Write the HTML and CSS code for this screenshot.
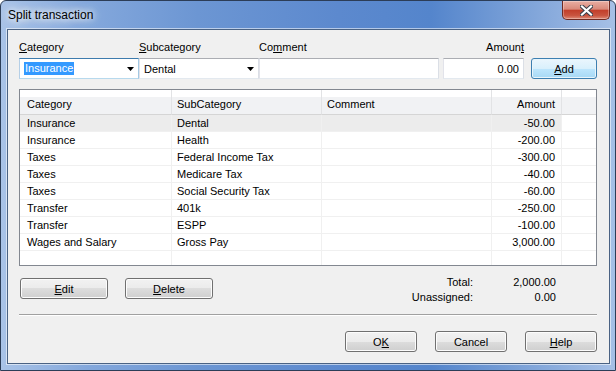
FILE: index.html
```html
<!DOCTYPE html>
<html lang="en">
  <head>
    <meta charset="UTF-8" />
    <meta name="viewport" content="width=device-width, initial-scale=1.0" />
    <title>Split transaction</title>
    <link rel="stylesheet" href="styles.css">
  </head>
  <body>
    <div class="window">
      <div class="titlebar">
        <span class="title">Split transaction</span>
        <div class="close-btn">
          <svg width="13" height="11" viewBox="0 0 13 11">
            <path d="M2 1.5 L11 9.5 M11 1.5 L2 9.5" stroke="#3a3f4a" stroke-width="4.2" stroke-linecap="square" fill="none" />
            <path d="M2 1.5 L11 9.5 M11 1.5 L2 9.5" stroke="#ffffff" stroke-width="2.2" stroke-linecap="square" fill="none" />
          </svg>
        </div>
      </div>

      <div class="client">
        <div class="entry">
          <label class="lbl"><u>C</u>ategory</label>
          <label class="lbl"><u>S</u>ubcategory</label>
          <label class="lbl">Co<u>m</u>ment</label>
          <label class="lbl lbl-right">Amoun<u>t</u></label>
          <span></span>

          <div class="combo focused">
            <span class="sel">Insurance</span>
            <svg class="arrow" width="7" height="4" viewBox="0 0 7 4"><polygon points="0,0 7,0 3.5,4" fill="#000" /></svg>
          </div>
          <div class="combo">
            <span>Dental</span>
            <svg class="arrow" width="7" height="4" viewBox="0 0 7 4"><polygon points="0,0 7,0 3.5,4" fill="#000" /></svg>
          </div>
          <div class="field"></div>
          <div class="field field-amount">0.00</div>
          <button class="btn btn-default btn-add"><u>A</u>dd</button>
        </div>

        <div class="list">
          <table class="grid">
            <thead>
              <tr>
                <th class="c-cat">Category</th>
                <th class="c-sub">SubCategory</th>
                <th class="c-com">Comment</th>
                <th class="c-amt num">Amount</th>
                <th class="filler"></th>
              </tr>
            </thead>
            <tbody>
              <tr class="selected"><td>Insurance</td><td>Dental</td><td></td><td class="num">-50.00</td><td class="filler"></td></tr>
              <tr><td>Insurance</td><td>Health</td><td></td><td class="num">-200.00</td><td class="filler"></td></tr>
              <tr><td>Taxes</td><td>Federal Income Tax</td><td></td><td class="num">-300.00</td><td class="filler"></td></tr>
              <tr><td>Taxes</td><td>Medicare Tax</td><td></td><td class="num">-40.00</td><td class="filler"></td></tr>
              <tr><td>Taxes</td><td>Social Security Tax</td><td></td><td class="num">-60.00</td><td class="filler"></td></tr>
              <tr><td>Transfer</td><td>401k</td><td></td><td class="num">-250.00</td><td class="filler"></td></tr>
              <tr><td>Transfer</td><td>ESPP</td><td></td><td class="num">-100.00</td><td class="filler"></td></tr>
              <tr><td>Wages and Salary</td><td>Gross Pay</td><td></td><td class="num">3,000.00</td><td class="filler"></td></tr>
              <tr class="empty"><td></td><td></td><td></td><td></td><td class="filler"></td></tr>
            </tbody>
          </table>
        </div>

        <div class="bottom">
          <button class="btn btn-wide btn-edit"><u>E</u>dit</button>
          <button class="btn btn-wide"><u>D</u>elete</button>
          <div class="totals">
            <span>Total:</span><span>2,000.00</span>
            <span>Unassigned:</span><span>0.00</span>
          </div>
        </div>

        <div class="sep"></div>

        <div class="actions">
          <button class="btn btn-dlg">O<u>K</u></button>
          <button class="btn btn-dlg">Cancel</button>
          <button class="btn btn-dlg"><u>H</u>elp</button>
        </div>
      </div>
    </div>
  </body>
</html>
```

FILE: styles.css
```css
* {
  box-sizing: border-box;
}
body {
  margin: 0;
  background: #ffffff;
  font-family: "Liberation Sans", Arial, sans-serif;
  font-size: 11px;
  color: #000;
}
u {
  text-decoration: underline;
  text-underline-offset: 1px;
}

/* window frame */
.window {
  width: 616px;
  height: 371px;
  border: 1px solid #2c3d57;
  border-radius: 6px 6px 0 0;
  padding: 0 5px 6px 6px;
  display: flex;
  flex-direction: column;
  background: linear-gradient(90deg, #a9c3e7 0%, #84a8dc 14%, #6c96d3 32%, #5c89ce 55%, #5485cc 70%, #7fa4d9 86%, #a6c0e6 100%);
}
.titlebar {
  height: 28px;
  flex: none;
  display: flex;
  justify-content: space-between;
  align-items: flex-start;
  padding-left: 1px;
}
.title {
  margin-top: 7px;
  font-size: 12px;
  line-height: 14px;
  color: #000;
  text-shadow: 0 0 6px #fff, 0 0 10px rgba(255, 255, 255, 0.9), 0 0 14px rgba(255, 255, 255, 0.7);
}
.close-btn {
  width: 48px;
  height: 19px;
  border: 1px solid #6f2a22;
  border-top: none;
  border-radius: 0 0 5px 5px;
  background: linear-gradient(#e9aea3 0%, #d98a7b 45%, #c23f2b 52%, #c9543f 80%, #de8b77 100%);
  box-shadow: inset 0 0 0 1px rgba(255, 255, 255, 0.3);
  display: flex;
  align-items: center;
  justify-content: center;
}

/* client area */
.client {
  flex: 1;
  background: #f0f0f0;
  border: 1px solid #4a6283;
  box-shadow: 0 0 0 1px rgba(255, 255, 255, 0.55);
  padding: 10px 12px 0 11px;
  display: flex;
  flex-direction: column;
}

/* entry row */
.entry {
  display: grid;
  grid-template-columns: 120px 120px 180px 85px 73px;
  grid-template-rows: 14px 21px;
  row-gap: 4px;
}
.lbl {
  line-height: 14px;
  white-space: nowrap;
}
.lbl-right {
  text-align: right;
}
.combo,
.field {
  height: 21px;
  background: #fff;
  border: 1px solid;
  border-color: #abadb3 #dbdfe6 #e3e9ef #e2e3ea;
  display: flex;
  align-items: center;
  padding: 0 4px;
}
.combo.focused {
  border-color: #3d7bad #a4c9e3 #b7d9ed #b5cfe7;
}
.sel {
  background: #3399ff;
  color: #fff;
  line-height: 13px;
  padding: 0 1px;
}
.arrow {
  margin-left: auto;
}
.field-amount {
  margin-left: 4px;
  justify-content: flex-end;
}

/* buttons */
.btn {
  height: 21px;
  padding: 0;
  font-family: "Liberation Sans", Arial, sans-serif;
  font-size: 11px;
  color: #000;
  border: 1px solid #707070;
  border-radius: 3px;
  background: linear-gradient(#f2f2f2 0%, #ebebeb 50%, #dddddd 50%, #cfcfcf 100%);
  box-shadow: inset 0 0 0 1px #fcfcfc;
}
.btn-default {
  border-color: #3c7fb1;
  background: linear-gradient(#eaf6fd 0%, #d9f0fc 50%, #bee6fd 50%, #a7d9f5 100%);
  box-shadow: inset 0 0 0 1px #e8f4fb;
}
.btn-add {
  width: 66px;
  margin-left: 7px;
}
.btn-wide {
  width: 88px;
  margin-top: 3px;
}
.btn-edit {
  margin-left: 1px;
  margin-right: 17px;
}
.btn-dlg {
  width: 72px;
}

/* list view */
.list {
  margin-top: 10px;
  height: 177px;
  border: 1px solid #828790;
  background: #fff;
  overflow: hidden;
}
.grid {
  width: 576px;
  table-layout: fixed;
  border-collapse: separate;
  border-spacing: 0;
}
.grid th {
  height: 25px;
  padding: 3px 5px 0;
  font-weight: normal;
  text-align: left;
  white-space: nowrap;
  background: linear-gradient(#ffffff 0, #ffffff 7px, #f1f2f4 7px, #f1f2f4 100%);
  border-right: 1px solid #e2e3e5;
  border-bottom: 1px solid #d5d5d5;
}
.grid td {
  line-height: 15px;
  padding: 1px 5px 0;
  white-space: nowrap;
  border-right: 1px solid #f0f0f0;
  border-bottom: 1px solid #f0f0f0;
}
.grid th:first-child,
.grid td:first-child {
  padding-left: 7px;
}
.grid .num {
  text-align: right;
  padding-right: 6px;
}
.grid .filler {
  border-right: none;
}
.c-cat {
  width: 152px;
}
.c-sub {
  width: 150px;
}
.c-com {
  width: 170px;
}
.c-amt {
  width: 70px;
}
.selected td {
  background: #ececec;
}
.selected td.filler {
  background: #fff;
}
.empty td {
  height: 14px;
  border-bottom: none;
}

/* totals and footer */
.bottom {
  margin-top: 9px;
  display: flex;
  align-items: flex-start;
}
.totals {
  margin-left: auto;
  margin-right: 41px;
  display: grid;
  grid-template-columns: auto 83px;
  line-height: 15px;
  text-align: right;
}
.sep {
  margin-top: 9px;
  border-top: 1px solid #a0a0a0;
  border-bottom: 1px solid #ffffff;
}
.actions {
  margin-top: 15px;
  display: flex;
  justify-content: flex-end;
  gap: 18px;
}
```
